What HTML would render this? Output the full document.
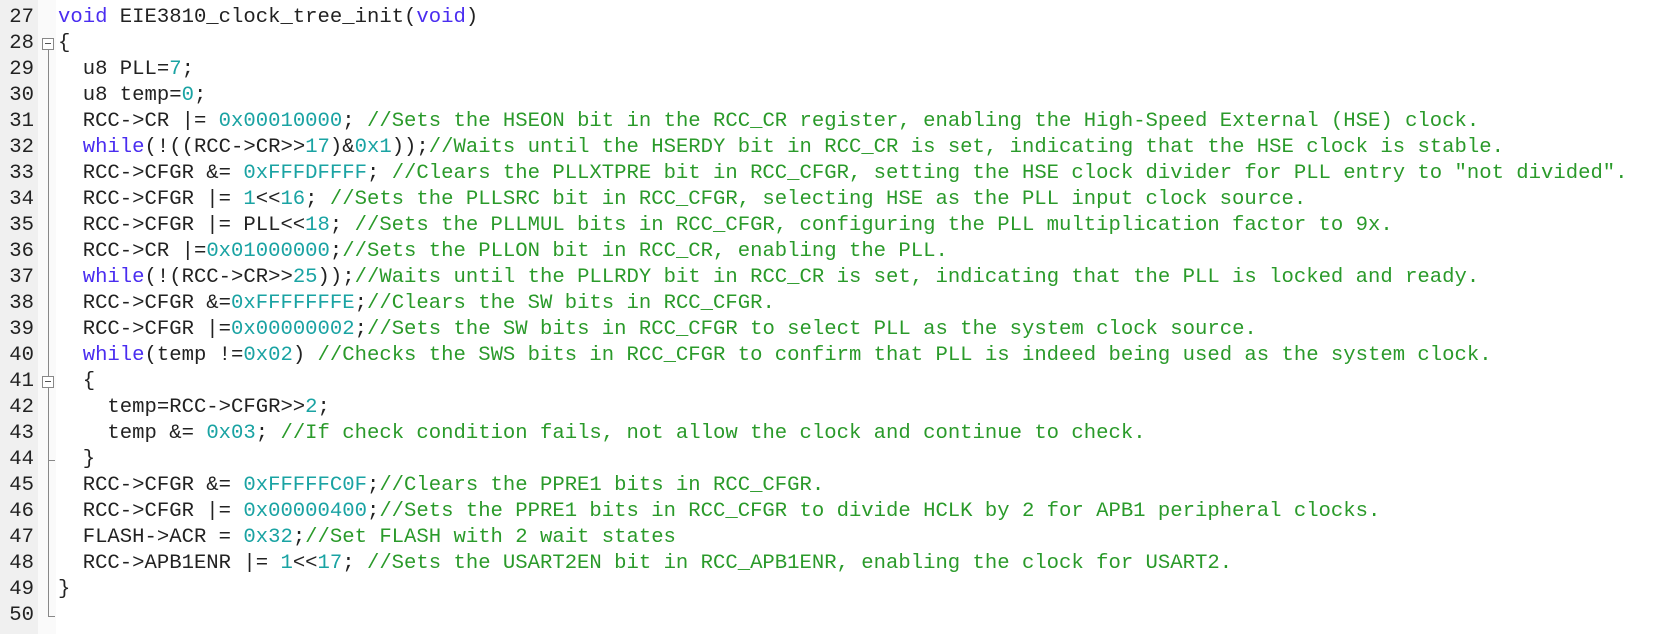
<!DOCTYPE html>
<html><head><style>
html,body{margin:0;padding:0;background:#fff;width:1655px;height:634px;overflow:hidden}
.g{position:absolute;left:0;top:0;width:38px;height:634px;background:#f0f0f0}
.f{position:absolute;left:38px;top:0;width:18px;height:634px;background:#fafafa}
.vl{position:absolute;left:48px;width:1px;background:#888}
.box{position:absolute;left:42px;width:12px;height:12px;border:1px solid #888;background:#fff;box-sizing:border-box}
.box:after{content:"";position:absolute;left:2px;top:4px;width:6px;height:1px;background:#555}
.tk{position:absolute;left:48px;width:7px;height:1px;background:#888}
.n{position:absolute;left:0;top:5px;width:34px;text-align:right;font:20.6px/26px "Liberation Mono",monospace;color:#222;white-space:pre}
.c{position:absolute;left:58px;top:5px;font:20.6px/26px "Liberation Mono",monospace;color:#222;white-space:pre}
.k{color:#4a2df0}.d{color:#1aa3a3}.m{color:#2a9a2a}
</style></head><body>
<div class="g"></div><div class="f"></div>
<div class="vl" style="top:50px;height:566px"></div>
<div class="box" style="top:38px"></div>
<div class="box" style="top:376px"></div>
<div class="tk" style="top:460px"></div>
<div class="tk" style="top:616px"></div>
<div class="n">27
28
29
30
31
32
33
34
35
36
37
38
39
40
41
42
43
44
45
46
47
48
49
50</div>
<div class="c"><span class="k">void</span> EIE3810_clock_tree_init(<span class="k">void</span>)
{
  u8 PLL=<span class="d">7</span>;
  u8 temp=<span class="d">0</span>;
  RCC-&gt;CR |= <span class="d">0x00010000</span>; <span class="m">//Sets the HSEON bit in the RCC_CR register, enabling the High-Speed External (HSE) clock.</span>
  <span class="k">while</span>(!((RCC-&gt;CR&gt;&gt;<span class="d">17</span>)&amp;<span class="d">0x1</span>));<span class="m">//Waits until the HSERDY bit in RCC_CR is set, indicating that the HSE clock is stable.</span>
  RCC-&gt;CFGR &amp;= <span class="d">0xFFFDFFFF</span>; <span class="m">//Clears the PLLXTPRE bit in RCC_CFGR, setting the HSE clock divider for PLL entry to "not divided".</span>
  RCC-&gt;CFGR |= <span class="d">1</span>&lt;&lt;<span class="d">16</span>; <span class="m">//Sets the PLLSRC bit in RCC_CFGR, selecting HSE as the PLL input clock source.</span>
  RCC-&gt;CFGR |= PLL&lt;&lt;<span class="d">18</span>; <span class="m">//Sets the PLLMUL bits in RCC_CFGR, configuring the PLL multiplication factor to 9x.</span>
  RCC-&gt;CR |=<span class="d">0x01000000</span>;<span class="m">//Sets the PLLON bit in RCC_CR, enabling the PLL.</span>
  <span class="k">while</span>(!(RCC-&gt;CR&gt;&gt;<span class="d">25</span>));<span class="m">//Waits until the PLLRDY bit in RCC_CR is set, indicating that the PLL is locked and ready.</span>
  RCC-&gt;CFGR &amp;=<span class="d">0xFFFFFFFE</span>;<span class="m">//Clears the SW bits in RCC_CFGR.</span>
  RCC-&gt;CFGR |=<span class="d">0x00000002</span>;<span class="m">//Sets the SW bits in RCC_CFGR to select PLL as the system clock source.</span>
  <span class="k">while</span>(temp !=<span class="d">0x02</span>) <span class="m">//Checks the SWS bits in RCC_CFGR to confirm that PLL is indeed being used as the system clock.</span>
  {
    temp=RCC-&gt;CFGR&gt;&gt;<span class="d">2</span>;
    temp &amp;= <span class="d">0x03</span>; <span class="m">//If check condition fails, not allow the clock and continue to check.</span>
  }
  RCC-&gt;CFGR &amp;= <span class="d">0xFFFFFC0F</span>;<span class="m">//Clears the PPRE1 bits in RCC_CFGR.</span>
  RCC-&gt;CFGR |= <span class="d">0x00000400</span>;<span class="m">//Sets the PPRE1 bits in RCC_CFGR to divide HCLK by 2 for APB1 peripheral clocks.</span>
  FLASH-&gt;ACR = <span class="d">0x32</span>;<span class="m">//Set FLASH with 2 wait states</span>
  RCC-&gt;APB1ENR |= <span class="d">1</span>&lt;&lt;<span class="d">17</span>; <span class="m">//Sets the USART2EN bit in RCC_APB1ENR, enabling the clock for USART2.</span>
}
</div>
</body></html>
